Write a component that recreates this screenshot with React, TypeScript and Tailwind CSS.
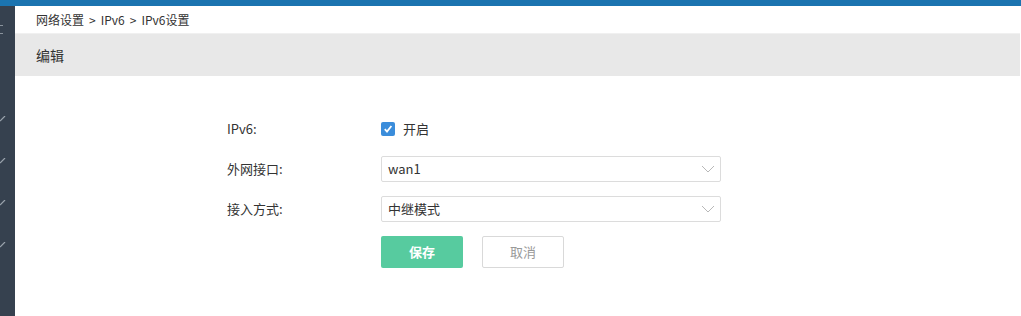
const font = { fontFamily: '"Noto Sans CJK SC", "Noto Sans", sans-serif' };

function SideMark() {
  return (
    <svg width="6" height="6" viewBox="0 0 6 6">
      <path d="M0 5 L5 0" stroke="#9aa3ad" strokeWidth="1.2" fill="none" />
    </svg>
  );
}

function Select({ value }: { value: string }) {
  return (
    <div className="flex h-[26px] w-[340px] items-center justify-between rounded-[2px] border border-[#dcdcdc] bg-white pl-[6px] pr-[3px] text-[13px] text-[#333]">
      <span>{value}</span>
      <svg width="14" height="8" viewBox="0 0 14 8" className="mr-[2px]">
        <path d="M1 1 L7 7 L13 1" stroke="#b8b8b8" strokeWidth="1" fill="none" />
      </svg>
    </div>
  );
}

export default function App() {
  return (
    <div className="flex h-[316px] w-[1021px] flex-col overflow-hidden bg-white" style={font}>
      <div className="h-[6px] w-full shrink-0 bg-[#1b74b0]" />
      <div className="flex flex-1">
        {/* collapsed sidebar */}
        <aside className="flex w-[15px] shrink-0 flex-col bg-[#36414f]">
          <div className="mt-[19px] flex flex-col gap-[7px]">
            <span className="h-[1px] w-[3px] bg-[#8a939d]" />
            <span className="h-[1px] w-[3px] bg-[#8a939d]" />
          </div>
          <div className="mt-[82px] flex flex-col gap-[36px]">
            <SideMark />
            <SideMark />
            <SideMark />
            <SideMark />
          </div>
        </aside>

        <main className="flex flex-1 flex-col pr-[1px]">
          <div className="flex h-[27px] items-center pl-[21px] text-[12px] text-[#333]">
            <span>网络设置</span>
            <span className="mx-[5px]">&gt;</span>
            <span>IPv6</span>
            <span className="mx-[5px]">&gt;</span>
            <span>IPv6设置</span>
          </div>
          <div className="flex h-[43px] items-center border-t border-[#f0f0f0] bg-[#e8e8e8] pl-[21px] text-[14px] text-[#333]">
            编辑
          </div>

          <div className="ml-[212px] mt-[40px] flex flex-col gap-[14px] text-[13px] text-[#333]">
            <div className="flex h-[26px] items-center">
              <span className="w-[154px]">IPv6:</span>
              <span className="flex h-[14px] w-[14px] items-center justify-center rounded-[2px] bg-[#3b8ddb]">
                <svg width="10" height="10" viewBox="0 0 10 10">
                  <path d="M1.8 5.2 L4 7.6 L8.4 2" stroke="white" strokeWidth="1.8" fill="none" />
                </svg>
              </span>
              <span className="ml-[8px]">开启</span>
            </div>
            <div className="flex items-center">
              <span className="w-[154px]">外网接口:</span>
              <Select value="wan1" />
            </div>
            <div className="flex items-center">
              <span className="w-[154px]">接入方式:</span>
              <Select value="中继模式" />
            </div>
            <div className="flex items-center gap-[19px] pl-[154px]">
              <button className="h-[32px] w-[82px] rounded-[2px] bg-[#57cb9f] text-[13px] font-bold text-white">
                保存
              </button>
              <button className="h-[32px] w-[82px] rounded-[2px] border border-[#d9d9d9] bg-white text-[13px] text-[#999]">
                取消
              </button>
            </div>
          </div>
        </main>
      </div>
    </div>
  );
}
